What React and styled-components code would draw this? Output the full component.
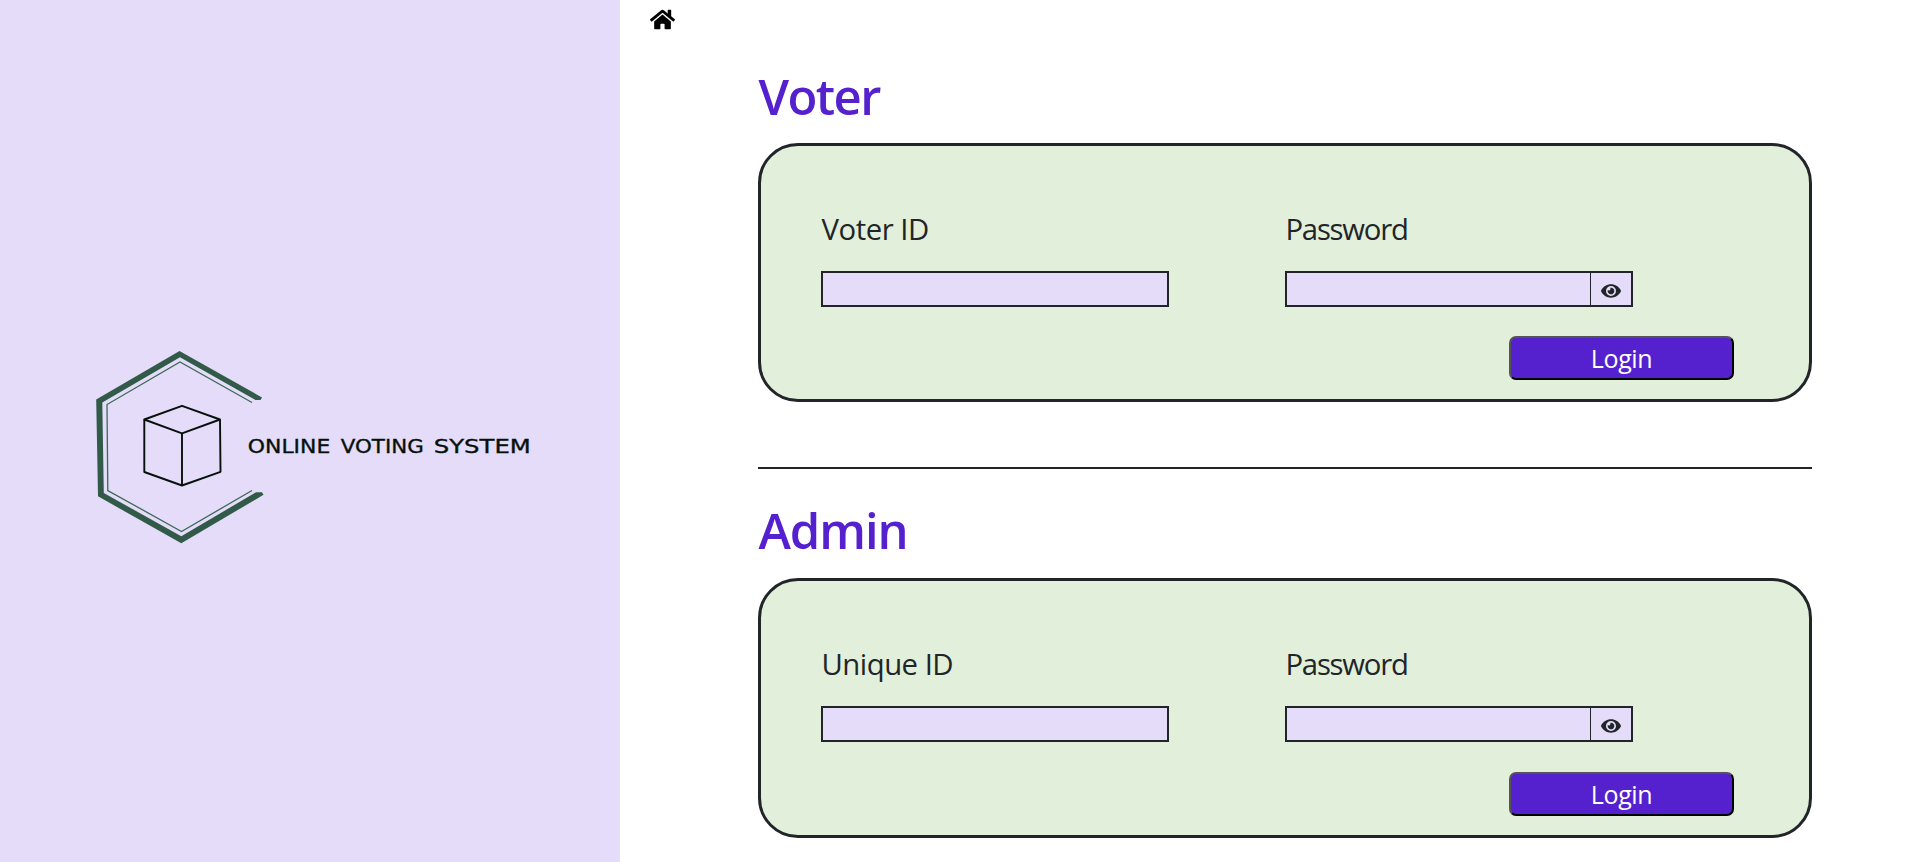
import React from "react";
import styled, { createGlobalStyle } from "styled-components";
import { FaHome, FaEye } from "react-icons/fa";

const GlobalStyle = createGlobalStyle`
  * { box-sizing: border-box; }
  body {
    margin: 0;
    background: #fff;
    color: #212529;
    font-family: "Segoe UI", "Open Sans", "Noto Sans", sans-serif;
  }
`;

const Page = styled.div`
  display: flex;
  height: 862px;
  overflow: hidden;
`;

const Sidebar = styled.aside`
  flex: 0 0 620px;
  padding: 340px 0 0 80px;
  background: #e4dcf9;
`;

const LogoSvg = styled.svg`
  display: block;
  width: 460px;
  height: 220px;
`;

const Main = styled.main`
  flex: 1;
  padding: 8px 106px 0 138px;
`;

const HomeLink = styled.a`
  display: block;
  height: 23px;
  margin-left: -108px;
  color: #000;

  svg {
    display: block;
    width: 25px;
    height: 23px;
  }
`;

const Section = styled.section`
  padding-top: ${(p) => p.$top}px;
`;

const Heading = styled.h1`
  margin: 0 0 ${(p) => p.$gap}px;
  font-size: 49px;
  line-height: 60px;
  font-weight: 600;
  letter-spacing: ${(p) => p.$tracking}px;
  text-indent: 0.5px;
  color: #5521cf;
`;

const Card = styled.form`
  height: 259.5px;
  padding: 63.1px 75px 0 60px;
  border: 3px solid #212529;
  border-radius: 40px;
  background: #e2efda;
`;

const Fields = styled.div`
  display: flex;
  gap: 116px;
`;

const Field = styled.div`
  width: 348px;
`;

const Label = styled.label`
  display: block;
  margin-bottom: 21.9px;
  font-size: 29.3px;
  line-height: 40px;
  letter-spacing: ${(p) => p.$tracking}px;
  text-indent: 0.5px;
  white-space: nowrap;
`;

const InputBox = styled.div`
  display: flex;
  height: 36px;
  border: 2px solid #212529;
  background: #e4dcf9;
`;

const Input = styled.input`
  flex: 1;
  min-width: 0;
  padding: 0 8px;
  border: 0;
  outline: 0;
  background: transparent;
  font: inherit;
  font-size: 20px;
`;

const EyeToggle = styled.span`
  display: flex;
  flex: 0 0 41px;
  align-items: center;
  justify-content: center;
  padding-top: 4px;
  border-left: 1px solid #212529;

  svg {
    width: 20px;
    height: 18px;
  }
`;

const LoginButton = styled.button`
  display: block;
  width: 225px;
  height: 44px;
  margin: 29.4px 0 0 auto;
  padding: 0;
  border: 2px outset #000;
  border-radius: 7px;
  background: #5521cf;
  color: #fff;
  font-family: inherit;
  font-size: 25px;
  line-height: 40px;
  letter-spacing: -0.4px;
`;

const Divider = styled.hr`
  height: 2px;
  margin: 64.6px 0 0;
  border: 0;
  background: #212529;
`;

function Logo() {
  return (
    <LogoSvg viewBox="80 340 460 220" role="img" aria-label="Online Voting System">
      <g fill="#315b48">
        <path d="M179.5 351 L262 397.5 L260.5 400 L255.5 400 L180 357.2 L102.3 402.5 L103.8 493 L181.3 536.3 L256 492.2 L262 492.2 L263.5 494.8 L181.3 543.3 L98 496.3 L96.2 399.6 Z" />
      </g>
      <path
        d="M252 402.5 L180 362 L107 404.5 L107.8 490.5 L181.5 531.5 L252 490.5"
        fill="none"
        stroke="#3d6a56"
        strokeWidth="1.3"
      />
      <g fill="none" stroke="#07110c" strokeWidth="1.9" strokeLinejoin="round">
        <path d="M144.3 419.5 L182 405.8 L220 419.5 L182 433.3 Z" />
        <path d="M144.3 419.5 V472 L182 485.5 L220.5 471.8 L220 419.5 M182 433.3 V485.5" />
      </g>
      <g fill="#07110c" stroke="#07110c" strokeWidth="0.35" fontFamily="'DejaVu Sans', sans-serif" fontSize="19">
        <text x="247.8" y="452.5" textLength="82.5" lengthAdjust="spacingAndGlyphs">ONLINE</text>
        <text x="340.8" y="452.5" textLength="83" lengthAdjust="spacingAndGlyphs">VOTING</text>
        <text x="433.8" y="452.5" textLength="97" lengthAdjust="spacingAndGlyphs">SYSTEM</text>
      </g>
    </LogoSvg>
  );
}

function LoginCard({ idLabel, idTracking }) {
  return (
    <Card onSubmit={(e) => e.preventDefault()}>
      <Fields>
        <Field>
          <Label $tracking={idTracking}>{idLabel}</Label>
          <InputBox>
            <Input type="text" aria-label={idLabel} />
          </InputBox>
        </Field>
        <Field>
          <Label $tracking={-1.25}>Password</Label>
          <InputBox>
            <Input type="password" aria-label="Password" />
            <EyeToggle>
              <FaEye />
            </EyeToggle>
          </InputBox>
        </Field>
      </Fields>
      <LoginButton type="submit">Login</LoginButton>
    </Card>
  );
}

export default function App() {
  return (
    <Page>
      <GlobalStyle />
      <Sidebar>
        <Logo />
      </Sidebar>
      <Main>
        <HomeLink aria-label="Home">
          <FaHome />
        </HomeLink>
        <Section $top={34.6}>
          <Heading $gap={17.3} $tracking={-1.6}>Voter</Heading>
          <LoginCard idLabel="Voter ID" idTracking={-0.45} />
        </Section>
        <Divider />
        <Section $top={30.6}>
          <Heading $gap={18.8} $tracking={-1.05}>Admin</Heading>
          <LoginCard idLabel="Unique ID" idTracking={-0.5} />
        </Section>
      </Main>
    </Page>
  );
}
